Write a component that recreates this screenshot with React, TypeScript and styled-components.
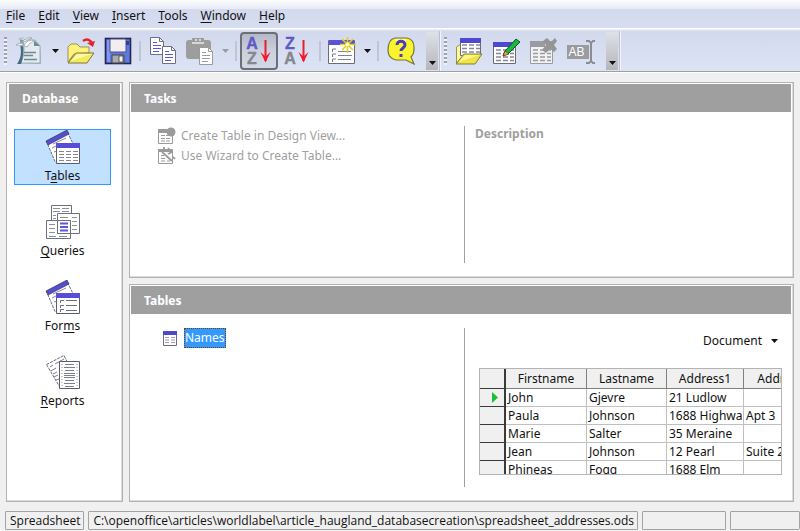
import React from 'react';
import styled, { createGlobalStyle } from 'styled-components';

const GlobalStyle = createGlobalStyle`
  * { box-sizing: border-box; }
  body {
    margin: 0;
    background: #fff;
    color: #111;
    font-family: 'Noto Sans', 'Open Sans', sans-serif;
    font-size: 12px;
    line-height: 16px;
  }
  button {
    font: inherit;
    color: inherit;
    background: none;
    border: 0;
    padding: 0;
    margin: 0;
  }
  svg { display: block; flex: none; }
  u { text-underline-offset: 2px; }
`;

const Window = styled.div`
  display: flex;
  flex-direction: column;
  height: 100vh;
  min-height: 480px;
  overflow: hidden;
  background: #f0f0f0;
  border-radius: 0 0 4px 4px;
`;

const MenuBar = styled.nav`
  display: flex;
  align-items: center;
  gap: 13px;
  height: 29px;
  flex: none;
  padding: 2px 6px 0;
  background: linear-gradient(#fdfdfe 0, #e6eaf5 9px, #d3daed 9px, #d6ddf0 28px, #fff 28px);
`;

const MenuItem = styled.button`
  white-space: nowrap;
`;

const ToolArea = styled.div`
  display: flex;
  align-items: center;
  flex: none;
  height: 44px;
  background: linear-gradient(#f6f8fd 0, #d2d9ec 2px, #dce3f5 41px, #dce3f5 42px, #a0a0a0 42px, #a0a0a0 43px, #fff 43px);
`;

const ToolBar = styled.div`
  display: flex;
  align-items: center;
  height: 40px;
  padding-left: 4px;
  border-right: 1px solid #b9bfcf;
  box-shadow: 1px 0 0 #f3f5fb;
`;

const Grip = styled.div`
  width: 3px;
  height: 28px;
  margin-right: 3px;
  background: repeating-linear-gradient(#9aa0b0 0, #9aa0b0 2px, #f2f4fa 2px, #f2f4fa 4px);
`;

const ToolButton = styled.button<{ $narrow?: boolean; $pressed?: boolean }>`
  display: flex;
  align-items: center;
  justify-content: center;
  width: ${(p) => (p.$narrow ? 36 : 38)}px;
  height: 38px;
  border-radius: 4px;
  border: 2px solid ${(p) => (p.$pressed ? '#6c6f78' : 'transparent')};
  background: ${(p) => (p.$pressed ? 'linear-gradient(#b4b9c8, #cbd0df 50%, #d3d8e6)' : 'none')};
`;

const ArrowButton = styled.button`
  display: flex;
  align-items: center;
  justify-content: center;
  width: 14px;
  height: 36px;
`;

const Separator = styled.div`
  width: 2px;
  height: 20px;
  margin: 0 3px;
  background: #bfc5d3;
`;

const Overflow = styled.button`
  display: flex;
  align-items: flex-end;
  justify-content: center;
  width: 12px;
  height: 38px;
  margin: 0 1px 0 6px;
  padding-bottom: 5px;
  background: linear-gradient(#dfe1e8, #b4b6bb);
`;

const Workspace = styled.div`
  display: flex;
  flex: 1;
  min-height: 0;
  gap: 6px;
  padding: 9px 6px 9px;
`;

const Panel = styled.section<{ $grow?: number }>`
  display: flex;
  flex-direction: column;
  flex: ${(p) => p.$grow ?? 'none'} 1 0;
  min-height: 0;
  background: #fff;
  border: 1px solid #b2b2b2;
  box-shadow: inset -1px -1px 0 #dcdcdc;
  padding: 1px 2px 2px 1px;
`;

const SidePanel = styled(Panel).attrs({ as: 'aside' })`
  flex: none;
  width: 117px;
  padding-left: 2px;
`;

const MainColumn = styled.main`
  display: flex;
  flex-direction: column;
  flex: 1;
  min-width: 0;
  gap: 6px;
`;

const PanelTitle = styled.h2`
  flex: none;
  height: 28px;
  margin: 0;
  padding: 0 13px;
  background: #9f9f9f;
  color: #fff;
  font-size: 12px;
  font-weight: 700;
  line-height: 29px;
`;

const SideList = styled.div`
  display: flex;
  flex-direction: column;
  gap: 19px;
  padding: 17px 9px 0 5px;
`;

const SideButton = styled.button<{ $selected?: boolean }>`
  display: flex;
  flex-direction: column;
  align-items: center;
  height: 56px;
  border: 1px solid ${(p) => (p.$selected ? '#3399ff' : 'transparent')};
  background: ${(p) => (p.$selected ? '#c2e0ff' : 'transparent')};
  gap: 4px;
`;

const PanelBody = styled.div`
  display: grid;
  grid-template-columns: 1fr 1fr;
  flex: 1;
  min-height: 0;
  padding: 14px 0 12px 6px;
`;

const ListPane = styled.div`
  display: flex;
  flex-direction: column;
  align-items: flex-start;
  padding-left: 21px;
`;

const DetailPane = styled.div`
  display: flex;
  flex-direction: column;
  min-width: 0;
  min-height: 0;
  border-left: 1px solid #a0a0a0;
  padding: 0 9px 12px 14px;
`;

const DescriptionPane = styled(DetailPane)`
  padding-left: 10px;
  color: #9f9f9f;
  font-weight: 700;
`;

const TaskButton = styled.button`
  display: flex;
  align-items: center;
  gap: 5px;
  height: 20px;
  white-space: nowrap;
  &:disabled { color: #9f9f9f; }
`;

const TableItem = styled.button`
  display: flex;
  align-items: center;
  gap: 7px;
  height: 20px;
  margin-left: 5px;
`;

const SelectedName = styled.span`
  background: #3399ff;
  color: #fff;
  line-height: 18px;
  border: 1px dotted #70400f;
`;

const PreviewMode = styled.button`
  display: flex;
  align-items: center;
  align-self: flex-end;
  gap: 9px;
  flex: none;
  height: 26px;
  margin-bottom: 14px;
  padding-right: 4px;
`;

const GridFrame = styled.div`
  flex: 1;
  min-height: 0;
  overflow: hidden;
  border: 1px solid #b4b4b4;
`;

const DataGrid = styled.table`
  table-layout: fixed;
  width: 344px;
  border-collapse: separate;
  border-spacing: 0;

  th, td {
    height: 18px;
    padding: 0 0 0 2px;
    overflow: hidden;
    white-space: nowrap;
    line-height: 16px;
    text-align: left;
    font-weight: 400;
    border-right: 1px solid #c0c0c0;
    border-bottom: 1px solid #c0c0c0;
  }
  thead th {
    height: 20px;
    padding: 0;
    text-align: center;
    background: #f0f0f0;
    border-right-color: #808080;
    border-bottom: 1px solid #808080;
  }
  tr > :first-child {
    background: #f0f0f0;
    border-right: 2px solid #3a3a3a;
    border-bottom-color: #3a3a3a;
  }
`;

const Marker = styled.svg`
  margin-left: 9px;
`;

const StatusBar = styled.footer`
  display: flex;
  flex: none;
  gap: 4px;
  padding: 0 0 1px 5px;
  font-family: 'Open Sans', 'Noto Sans', sans-serif;
`;

const StatusCell = styled.div<{ $width?: number; $fill?: boolean }>`
  flex: ${(p) => (p.$fill ? '1 1 0' : 'none')};
  width: ${(p) => (p.$width ? `${p.$width}px` : 'auto')};
  height: 19px;
  padding: 1px 3px 0 4px;
  border: 1px solid #a3a3a3;
  border-radius: 1px;
  white-space: nowrap;
`;

const Caret = ({ color = '#111' }: { color?: string }) => (
  <svg width="7" height="4" viewBox="0 0 7 4"><path d="M0 0h7L3.5 4z" fill={color} /></svg>
);

const Svg28 = ({ children }: { children: React.ReactNode }) => (
  <svg width="28" height="28" viewBox="0 0 28 28">{children}</svg>
);

const NewIcon = () => (
  <Svg28>
    <defs>
      <linearGradient id="doc" x1="0" x2="1" y1="0" y2="1">
        <stop offset="0" stopColor="#5d7f92" /><stop offset=".4" stopColor="#dce7ec" /><stop offset="1" stopColor="#9fb6c2" />
      </linearGradient>
    </defs>
    <path d="M5 3h16l5 6v18H2c3-7 4-14 3-24z" fill="url(#doc)" />
    <path d="M8 3h12l5 6v17H6c3-7 4-14 2-23z" fill="#e3ebef" stroke="#8fa5b0" strokeWidth=".8" />
    <path d="M2 27c4-6 5-13 3-20l3 1c1 7 0 13-2 19z" fill="#456b80" />
    <path d="M19 3v6h6z" fill="#6d8b9b" />
    <path d="M9 15.500h12M9 18.500h9M9 22.500h13" stroke="#6f8894" strokeWidth="1.500" />
    <path d="M1 8c3-3 6-2 8 1 2-5 6-7 11-5-3 1-6 2-8 6-3-1-7-2-11-2z" fill="#fff" stroke="#a4b0b8" />
    <path d="M4 2c3-2 5-1 6 1 2-2 4-3 7-2-3 1-5 2-7 4-1-2-3-3-6-3z" fill="#eef1f3" stroke="#9aa6ae" strokeWidth=".8" />
  </Svg28>
);

const OpenIcon = () => (
  <Svg28>
    <path d="M1 25V10l3-3h6l3 3h9v6L7 17z" fill="#fff27a" stroke="#999355" />
    <path d="M1 26l8-10h18l-7 10z" fill="#f4ea60" stroke="#7e7935" />
    <path d="M4 24l6-7h15z" fill="#fff9a6" />
    <path d="M16 4c4-3 8-1 9 3" fill="none" stroke="#e3222b" strokeWidth="2.4" />
    <path d="M20 6l8-2-2 6z" fill="#e3222b" />
  </Svg28>
);

const SaveIcon = () => (
  <Svg28>
    <rect x="1.5" y="1.5" width="25" height="25" fill="#5c7be0" stroke="#25254b" strokeWidth="1.6" />
    <path d="M3 3h3v22H3z" fill="#8298f0" />
    <path d="M6 2h16v13H6z" fill="#f3edf0" stroke="#4d4f86" />
    <path d="M22 4h3v4h-3z" fill="#3b3a8f" />
    <path d="M8 18h12v8H8z" fill="#a9abb0" stroke="#44454d" />
    <path d="M15 19h4v6h-4z" fill="#f4f4f4" stroke="#44454d" strokeWidth=".8" />
  </Svg28>
);

const Page = ({ x, y, line, edge }: { x: number; y: number; line: string; edge: string }) => (
  <g transform={`translate(${x} ${y})`}>
    <path d="M.5.5h9l4 4v13H.5z" fill="#fff" stroke={edge} />
    <path d="M9.500.5v4h4" fill="none" stroke={edge} />
    <path d="M3 5.500h4M3 8.500h8M3 11.500h8M3 14.500h6" stroke={line} />
  </g>
);

const CopyIcon = () => (
  <Svg28><Page x={1} y={0} line="#5b55d8" edge="#6b6e8a" /><Page x={13} y={9} line="#5b55d8" edge="#6b6e8a" /></Svg28>
);

const PasteIcon = () => (
  <Svg28>
    <rect x="0" y="3" width="25" height="19" rx="3" fill="#9d9d9d" />
    <path d="M6 1h12v6H6z" fill="#9d9d9d" />
    <path d="M6 6h12M9 3h2M13 3h2" stroke="#e9e9ee" strokeWidth="1.500" />
    <Page x={13} y={10} line="#9b9b9b" edge="#9b9b9b" />
  </Svg28>
);

const SortIcon = ({ top, bottom }: { top: string; bottom: string }) => (
  <svg width="28" height="32" viewBox="0 -2 28 32">
    <g fontFamily="'Liberation Sans', sans-serif" fontWeight="700" fontSize="16" textAnchor="middle" strokeWidth=".4">
      <text x="7" y="12" fill="#6259c8" stroke="#6259c8">{top}</text>
      <text x="7" y="27" fill="#85868e" stroke="#85868e">{bottom}</text>
    </g>
    <path d="M20.500 3v21" stroke="#ee1b2b" strokeWidth="2" />
    <path d="M15.500 15l5 10.500 5-10.500-5 4.500z" fill="#ee1b2b" />
  </svg>
);

const WizardIcon = () => (
  <Svg28>
    <path d="M.5 3.500h26v23H.5z" fill="#fff" stroke="#6a6c78" />
    <path d="M1 3h25v5H1z" fill="#5a51d4" />
    <path d="M4.500 15v-3H8M4.500 20v-3H8M4.500 25v-3H8" stroke="#777a88" fill="none" />
    <path d="M10 14.500h13M10 18.500h14M10 22.500h13" stroke="#80838f" strokeWidth="1.200" />
    <path d="M19.500 0v16M12 7.500h16M14 2l11 11M25 2L14 13" stroke="#e4cf1c" strokeWidth="1.600" />
    <circle cx="19.500" cy="7.500" r="2" fill="#fffbc0" />
  </Svg28>
);

const HelpIcon = () => (
  <Svg28>
    <path d="M8 1h12c5 1 7 4 7 9v3c0 3-2 6-3 7l3 7-8-4H9c-5-1-8-5-8-10 0-6 2-11 7-12z" fill="#fbf32c" stroke="#74763d" strokeWidth="1.200" />
    <path d="M8 3h11" stroke="#fffcae" strokeWidth="2" />
    <path d="M10 8c0-5 8-5 8 0 0 3-4 3-4 6" fill="none" stroke="#4940b8" strokeWidth="3" />
    <path d="M12.500 17h3v3h-3z" fill="#4940b8" />
  </Svg28>
);

const Rows = ({ x, y, color }: { x: number; y: number; color: string }) => (
  <path
    transform={`translate(${x} ${y})`}
    d="M0 1h5M7 1h5M14 1h4M0 4.500h5M7 4.500h5M14 4.500h4M0 8h5M7 8h5M14 8h4M0 11.500h5M7 11.500h5M14 11.500h4"
    stroke={color}
    strokeWidth="1.400"
  />
);

const OpenTableIcon = () => (
  <Svg28>
    <path d="M1.500 26V10l3-2h5v10z" fill="#fff7a0" stroke="#999355" />
    <path d="M5.500 1.500h20v17h-20z" fill="#fff" stroke="#6a6c78" />
    <path d="M5 1h21v5H5z" fill="#4f48d0" />
    <Rows x={7} y={7} color="#868995" />
    <path d="M1 27l8-10h18l-7 10z" fill="#f1e345" stroke="#827d38" />
    <path d="M4 25l6-7h14z" fill="#fff78e" />
  </Svg28>
);

const EditTableIcon = () => (
  <Svg28>
    <path d="M1.500 5.500h22v21h-22z" fill="#fff" stroke="#6a6c78" />
    <path d="M1 5h23v5H1z" fill="#4f48d0" />
    <Rows x={4} y={12} color="#868995" />
    <path d="M11 19l2-5L24 2l4 3-11 11z" fill="#19b83c" stroke="#0d5423" />
    <path d="M11 19l2-5 4 3z" fill="#e8a657" stroke="#5a3a18" strokeWidth=".7" />
  </Svg28>
);

const DeleteTableIcon = () => (
  <Svg28>
    <path d="M1.500 4.500h22v22h-22z" fill="#f1f2f6" stroke="#9b9b9f" />
    <path d="M1 4h15v6H1z" fill="#9b9b9f" />
    <Rows x={4} y={12} color="#9b9b9f" />
    <path d="M14 4l4-3 4 4 4-4 2 3-3 4 3 4-3 3-4-3-4 4-4-3 4-5z" fill="#959595" />
  </Svg28>
);

const RenameIcon = () => (
  <Svg28>
    <path d="M0 8h22v14H0z" fill="#9b9b9f" />
    <text x="9.500" y="19" fill="#fff" fontFamily="'Liberation Sans', sans-serif" fontSize="12" textAnchor="middle">AB</text>
    <path d="M24 6v19" stroke="#8c8c90" strokeWidth="2" />
    <path d="M19 4h3l2 2 2-2h2M19 26h3l2-2 2 2h2" fill="none" stroke="#8c8c90" strokeWidth="1.800" />
  </Svg28>
);

const Svg36 = ({ children }: { children: React.ReactNode }) => (
  <svg width="36" height="34" viewBox="0 0 36 34">{children}</svg>
);

const SheetPair = ({ children }: { children: React.ReactNode }) => (
  <Svg36>
    <path d="M1.500 11.500L22 1.500l6 12v18H10z" fill="#fff" stroke="#6a6c7c" strokeDasharray="3 1" />
    <path d="M1 11L22 0l2 4L3 15z" fill="#564ed0" stroke="#38385a" strokeWidth=".7" />
    <path d="M7 18l4-2M9 22l3-1M8 14l13-6" stroke="#898c98" />
    <path d="M11.500 14.500h23v19h-23z" fill="#fff" stroke="#5b5e70" />
    <path d="M11 13h24v5H11z" fill="#564ed8" />
    {children}
  </Svg36>
);

const TablesIcon = () => (
  <SheetPair>
    <path d="M14 21.500h5M21 21.500h5M28 21.500h5M14 24.500h5M21 24.500h5M28 24.500h5M14 27.500h5M21 27.500h5M28 27.500h5M14 30.500h5M21 30.500h5M28 30.500h5" stroke="#858892" />
  </SheetPair>
);

const FormsIcon = () => (
  <SheetPair>
    <path d="M21 20.500h11M21 25.500h11M21 30.500h11" stroke="#6c6f7c" />
    <path d="M15.500 23v-2.500H19M15.500 28v-2.500H19M15.500 32v-2.500H19" fill="none" stroke="#6c6f7c" />
  </SheetPair>
);

const QueriesIcon = () => (
  <Svg36>
    <g fill="#fff" stroke="#6d7080">
      <path d="M6.500.5h20v24h-20z" />
      <path d="M12.500 8.500h22v20h-22z" />
      <path d="M1.500 15.500h24v18h-24z" />
      <path d="M12.500 15.500h13v13h-13z" />
    </g>
    <path d="M8 3.500h7M17 3.500h7M8 6.500h7M17 6.500h7M8 10.500h3M8 13.500h3M27 12.500h5M15 12.500h8M27 16.500h5M27 20.500h5M27 24.500h5M4 19.500h6M4 23.500h6M4 27.500h6M4 31.500h7M14 31.500h8" stroke="#8d909c" />
    <path d="M15 18.500h8M15 22h8M15 25.500h8" stroke="#5a58e0" strokeWidth="2" />
  </Svg36>
);

const ReportsIcon = () => (
  <Svg36>
    <path d="M1.500 9.500L19 .5l4 8v24h-8z" fill="#fff" stroke="#6a6c7c" strokeDasharray="3 1" />
    <path d="M5 12l3-2M6 16l5-3M8 19l4-2M9 22l4-2M11 25l3-1M10 9l9-5" stroke="#7d808c" />
    <path d="M14.500 6.500h20v27h-20z" fill="#fff" stroke="#5b5e70" />
    <path d="M17 9v23M32 9v23" stroke="#8d909c" strokeDasharray="1 2" />
    <path d="M20 9.500h9M19 12.500h11M20 15.500h9M19 18.500h11M19 20.500h11M19 22.500h11M20 25.500h9M19 28.500h11M20 31.500h9" stroke="#7d808c" />
  </Svg36>
);

const DesignTaskIcon = () => (
  <svg width="18" height="18" viewBox="0 0 18 18">
    <path d="M.5 2.500h14v14H.5z" fill="#fff" stroke="#9a9a9a" />
    <path d="M0 2h12v4H0z" fill="#9a9a9a" />
    <path d="M3 8.500h4M8 8.500h4M3 11.500h4M8 11.500h4M3 14h4M8 14h4" stroke="#9a9a9a" />
    <circle cx="13" cy="5" r="4.500" fill="#9a9a9a" />
  </svg>
);

const WizardTaskIcon = () => (
  <svg width="18" height="18" viewBox="0 0 18 18">
    <path d="M.5 2.500h14v14H.5z" fill="#fff" stroke="#9a9a9a" />
    <path d="M0 2h14v3H0z" fill="#9a9a9a" />
    <path d="M3 8.500h3M3 11.500h4M3 14h4M9 14h3" stroke="#9a9a9a" />
    <path d="M4 5l10 9M6 0v5M11 1l-2 4M14 5l-4 2M15 10l2 2" stroke="#9a9a9a" strokeWidth="1.800" />
  </svg>
);

const SmallTableIcon = () => (
  <svg width="14" height="15" viewBox="0 0 14 15">
    <path d="M.5.5h13v14H.5z" fill="#fff" stroke="#6a6c80" />
    <path d="M0 0h14v4H0z" fill="#5048cc" />
    <path d="M2 6.500h4M8 6.500h4M2 9h4M8 9h4M2 11.500h4M8 11.500h4" stroke="#9a9ca6" />
  </svg>
);

const menus: [string, string][] = [
  ['F', 'ile'], ['E', 'dit'], ['V', 'iew'], ['I', 'nsert'], ['T', 'ools'], ['W', 'indow'], ['H', 'elp'],
];

const sections = [
  { label: <>T<u>a</u>bles</>, icon: <TablesIcon />, selected: true },
  { label: <><u>Q</u>ueries</>, icon: <QueriesIcon /> },
  { label: <>For<u>m</u>s</>, icon: <FormsIcon /> },
  { label: <><u>R</u>eports</>, icon: <ReportsIcon /> },
];

const records = [
  ['John', 'Gjevre', '21 Ludlow', ''],
  ['Paula', 'Johnson', '1688 Highwa', 'Apt 3'],
  ['Marie', 'Salter', '35 Meraine', ''],
  ['Jean', 'Johnson', '12 Pearl', 'Suite 2'],
  ['Phineas', 'Fogg', '1688 Elm', ''],
];

export default function App() {
  return (
    <>
      <GlobalStyle />
      <Window>
        <MenuBar>
          {menus.map(([key, rest]) => (
            <MenuItem key={key}><u>{key}</u>{rest}</MenuItem>
          ))}
        </MenuBar>

        <ToolArea>
          <ToolBar role="toolbar" aria-label="Standard">
            <Grip />
            <ToolButton aria-label="New"><NewIcon /></ToolButton>
            <ArrowButton aria-label="New options"><Caret /></ArrowButton>
            <ToolButton aria-label="Open"><OpenIcon /></ToolButton>
            <ToolButton $narrow aria-label="Save"><SaveIcon /></ToolButton>
            <Separator />
            <ToolButton aria-label="Copy"><CopyIcon /></ToolButton>
            <ToolButton $narrow aria-label="Paste" disabled><PasteIcon /></ToolButton>
            <ArrowButton aria-label="Paste options" disabled><Caret color="#9b9b9f" /></ArrowButton>
            <Separator />
            <ToolButton $pressed aria-label="Sort ascending"><SortIcon top="A" bottom="Z" /></ToolButton>
            <ToolButton aria-label="Sort descending"><SortIcon top="Z" bottom="A" /></ToolButton>
            <Separator />
            <ToolButton $narrow aria-label="Form"><WizardIcon /></ToolButton>
            <ArrowButton aria-label="Form options"><Caret /></ArrowButton>
            <Separator />
            <ToolButton aria-label="Help"><HelpIcon /></ToolButton>
            <Overflow aria-label="More standard tools"><Caret /></Overflow>
          </ToolBar>
          <ToolBar role="toolbar" aria-label="Table">
            <Grip />
            <ToolButton aria-label="Open table"><OpenTableIcon /></ToolButton>
            <ToolButton $narrow aria-label="Edit table"><EditTableIcon /></ToolButton>
            <ToolButton aria-label="Delete table" disabled><DeleteTableIcon /></ToolButton>
            <ToolButton aria-label="Rename table" disabled><RenameIcon /></ToolButton>
            <Overflow aria-label="More table tools"><Caret /></Overflow>
          </ToolBar>
        </ToolArea>

        <Workspace>
          <SidePanel>
            <PanelTitle>Database</PanelTitle>
            <SideList>
              {sections.map((s, i) => (
                <SideButton key={i} $selected={s.selected}>
                  {s.icon}
                  <span>{s.label}</span>
                </SideButton>
              ))}
            </SideList>
          </SidePanel>

          <MainColumn>
            <Panel $grow={9}>
              <PanelTitle>Tasks</PanelTitle>
              <PanelBody>
                <ListPane>
                  <TaskButton disabled><DesignTaskIcon />Create Table in Design View...</TaskButton>
                  <TaskButton disabled><WizardTaskIcon />Use Wizard to Create Table...</TaskButton>
                </ListPane>
                <DescriptionPane>Description</DescriptionPane>
              </PanelBody>
            </Panel>

            <Panel $grow={10}>
              <PanelTitle>Tables</PanelTitle>
              <PanelBody>
                <ListPane>
                  <TableItem><SmallTableIcon /><SelectedName>Names</SelectedName></TableItem>
                </ListPane>
                <DetailPane>
                  <PreviewMode>Document <Caret /></PreviewMode>
                  <GridFrame>
                    <DataGrid>
                      <colgroup>
                        <col width="26" /><col width="81" /><col width="80" /><col width="77" /><col width="80" />
                      </colgroup>
                      <thead>
                        <tr><th /><th>Firstname</th><th>Lastname</th><th>Address1</th><th>Address2</th></tr>
                      </thead>
                      <tbody>
                        {records.map((r, i) => (
                          <tr key={i}>
                            <th>
                              {i === 0 && (
                                <Marker width="8" height="11" viewBox="0 0 8 11">
                                  <path d="M1 0l6 5.500L1 11z" fill="#18c436" />
                                </Marker>
                              )}
                            </th>
                            {r.map((v, j) => <td key={j}>{v}</td>)}
                          </tr>
                        ))}
                      </tbody>
                    </DataGrid>
                  </GridFrame>
                </DetailPane>
              </PanelBody>
            </Panel>
          </MainColumn>
        </Workspace>

        <StatusBar>
          <StatusCell>Spreadsheet</StatusCell>
          <StatusCell>{'C:\\openoffice\\articles\\worldlabel\\article_haugland_databasecreation\\spreadsheet_addresses.ods'}</StatusCell>
          <StatusCell $width={84} />
          <StatusCell $fill />
        </StatusBar>
      </Window>
    </>
  );
}
